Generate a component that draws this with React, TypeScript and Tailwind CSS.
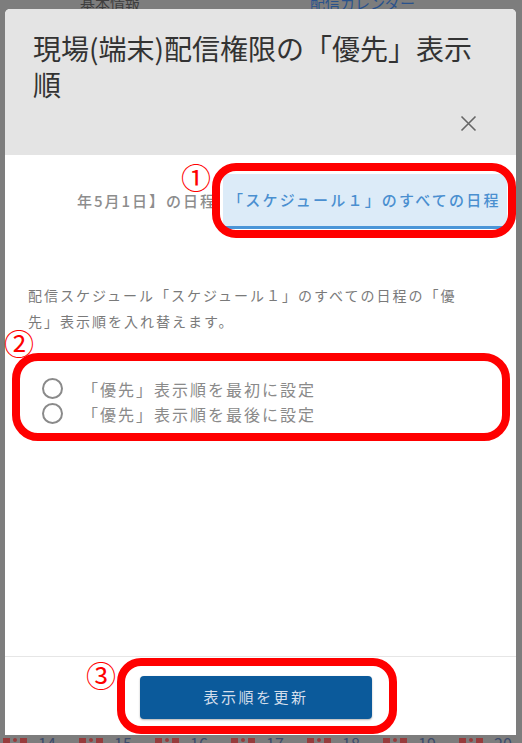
const dates = ['14', '15', '16', '17', '18', '19', '20'];

function Radio({ label }: { label: string }) {
  return (
    <label className="flex h-[25px] items-center gap-[19px]">
      <span className="h-[21px] w-[21px] shrink-0 rounded-full border-2 border-[#8a8a8a]" />
      <span className="text-[16px] tracking-[2px] text-[#8a8a8a]">{label}</span>
    </label>
  );
}

export default function App() {
  return (
    <div className="relative h-[743px] w-[522px] overflow-hidden bg-[#7d7d7d] font-['Noto_Sans_CJK_JP',sans-serif]">
      {/* page behind the backdrop */}
      <div className="flex h-full flex-col justify-between">
        <div className="flex h-[9px] items-end overflow-hidden text-[15px] leading-[12px]">
          <span className="ml-[80px] text-[#3e3e3e]">基本情報</span>
          <span className="ml-[170px] text-[#2a528c]">配信カレンダー</span>
        </div>
        <div className="flex h-[8px] items-start overflow-hidden">
          {dates.map((d) => (
            <div key={d} className="flex w-[76px] shrink-0 items-start gap-[3px] pl-[3px] pt-[3px]">
              <span className="h-[5px] w-[7px] bg-[#973c3c]" />
              <span className="h-[4px] w-[4px] rounded-full bg-[#973c3c]" />
              <span className="h-[5px] w-[7px] bg-[#973c3c]" />
              <span className="-mt-[3px] ml-[8px] text-[16px] leading-[16px] text-[#3c4b6c]">{d}</span>
            </div>
          ))}
        </div>
      </div>

      {/* modal */}
      <div className="absolute left-[5px] top-[9px] flex h-[726px] w-[511px] flex-col overflow-hidden rounded-t-[5px] bg-white">
        <div className="flex h-[146px] shrink-0 flex-col bg-[#e4e4e4]">
          <h1 className="pl-[28px] pr-[33px] pt-[21px] text-[28px] font-normal leading-[36px] text-[#333]">
            現場(端末)配信権限の「優先」表示順
          </h1>
          <div className="mt-auto flex justify-end pb-[23px] pr-[39px]">
            <svg width="17" height="17" viewBox="0 0 17 17" className="text-[#666]">
              <path d="M1.5 1.5L15.5 15.5M15.5 1.5L1.5 15.5" stroke="currentColor" strokeWidth="1.6" fill="none" />
            </svg>
          </div>
        </div>

        <div className="flex flex-1 flex-col">
          <div className="mt-[19px] flex h-[55px] items-center gap-[6px] overflow-hidden pl-[72px]">
            <span className="min-w-0 overflow-hidden whitespace-nowrap text-[15px] font-medium tracking-[2px] text-[#8d8d8d]">年5月1日】の日程</span>
            <div className="flex h-[55px] w-[284px] shrink-0 items-center border-b-[3px] border-[#4a95d8] bg-[#dcebf8] pl-[5px]">
              <span className="whitespace-nowrap text-[15px] font-medium tracking-[2.2px] text-[#4a8fd0]">「スケジュール１」のすべての日程</span>
            </div>
          </div>

          <p className="mt-[53px] pl-[23px] pr-[46px] text-[14px] leading-[26px] tracking-[2px] text-[#7a7a7a]">
            配信スケジュール「スケジュール１」のすべての日程の「優先」表示順を入れ替えます。
          </p>

          <div className="mt-[42px] flex flex-col pl-[37px]">
            <Radio label="「優先」表示順を最初に設定" />
            <Radio label="「優先」表示順を最後に設定" />
          </div>
        </div>

        <div className="h-[79px] shrink-0 border-t border-[#e6e6e6] pt-[19px]">
          <button className="ml-[135px] flex h-[43px] w-[232px] items-center justify-center rounded-[4px] bg-[#0b5a9b] text-[15px] tracking-[2.5px] text-[#d3deeb] shadow-[0_1px_2px_rgba(0,0,0,0.3)]">
            表示順を更新
          </button>
        </div>
      </div>

      {/* annotations */}
      <div className="absolute left-[212px] top-[163px] h-[75px] w-[304px] rounded-[24px] border-[8px] border-[#ff0000]" />
      <div className="absolute left-[12px] top-[353px] h-[88px] w-[498px] rounded-[26px] border-[8px] border-[#ff0000]" />
      <div className="absolute left-[117px] top-[658px] h-[76px] w-[280px] rounded-[24px] border-[8px] border-[#ff0000]" />
      <span className="absolute left-[181px] top-[161px] text-[30px] leading-[30px] text-[#ff0000]">①</span>
      <span className="absolute left-[4px] top-[327px] text-[30px] leading-[30px] text-[#ff0000]">②</span>
      <span className="absolute left-[86px] top-[659px] text-[30px] leading-[30px] text-[#ff0000]">③</span>
    </div>
  );
}
